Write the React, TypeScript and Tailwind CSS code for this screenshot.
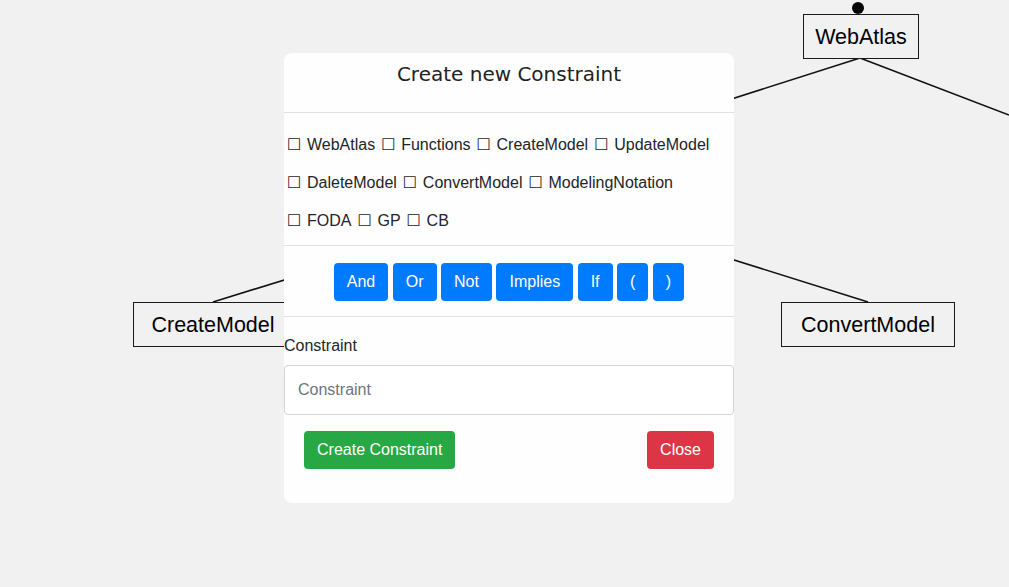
import React from "react";

const items: string[][] = [
  ["WebAtlas", "Functions", "CreateModel", "UpdateModel"],
  ["DaleteModel", "ConvertModel", "ModelingNotation"],
  ["FODA", "GP", "CB"],
];

const ops = ["And", "Or", "Not", "Implies", "If", "(", ")"];

function Node({ label, className }: { label: string; className: string }) {
  return (
    <div
      className={
        "absolute flex items-center justify-center border-[1.5px] border-[#1a1a1a] bg-[#f1f1f1] text-[21.5px] text-black h-[45px] pt-[2px] " +
        className
      }
    >
      {label}
    </div>
  );
}

export default function App() {
  return (
    <div
      className="relative w-[1009px] h-[587px] overflow-hidden bg-[#f1f1f1]"
      style={{ fontFamily: '"Liberation Sans", Arial, sans-serif' }}
    >
      <svg className="absolute inset-0" width="1009" height="587">
        <line x1="860" y1="58" x2="600" y2="141" stroke="#111" strokeWidth="1.6" />
        <line x1="860" y1="58" x2="1009" y2="115" stroke="#111" strokeWidth="1.6" />
        <line x1="213" y1="302" x2="420" y2="238" stroke="#111" strokeWidth="1.6" />
        <line x1="868" y1="302" x2="600" y2="218" stroke="#111" strokeWidth="1.6" />
        <circle cx="858" cy="8" r="6" fill="#000" />
      </svg>

      <Node label="WebAtlas" className="left-[803px] top-[14px] w-[116px]" />
      <Node label="CreateModel" className="left-[133px] top-[302px] w-[160px]" />
      <Node label="ConvertModel" className="left-[781px] top-[302px] w-[174px]" />

      <div className="absolute left-[284px] top-[53px] w-[450px] h-[450px] rounded-[8px] bg-[#fffefe] text-[#212529] text-[16px] flex flex-col">
        <div className="h-[60px] border-b border-[#dee2e6] pt-[8px] text-center">
          <div
            className="text-[20px] leading-[26px] text-[#222]"
            style={{ fontFamily: '"DejaVu Sans", Verdana, sans-serif' }}
          >
            Create new Constraint
          </div>
        </div>

        <div className="h-[133px] border-b border-[#dee2e6] pt-[13px] pl-[3px] flex flex-col">
          {items.map((row, i) => (
            <div key={i} className="h-[38px] flex items-center gap-[6px] whitespace-nowrap">
              {row.map((it) => (
                <div key={it} className="flex items-center gap-[7px]">
                  <span
                    style={{ fontFamily: '"DejaVu Sans", sans-serif' }}
                    className="inline-block w-[13px] text-[16px] leading-[20px]"
                  >
                    ☐
                  </span>
                  <span>{it}</span>
                </div>
              ))}
            </div>
          ))}
        </div>

        <div className="h-[71px] border-b border-[#dee2e6] flex items-center justify-center gap-[4.5px] pt-[1px]">
          {ops.map((o) => (
            <button
              key={o}
              className="h-[38px] px-[13px] rounded-[4px] bg-[#007bff] text-white text-[16px] leading-[24px]"
            >
              {o}
            </button>
          ))}
        </div>

        <div className="pt-[17px] flex flex-col">
          <div className="h-[24px] leading-[24px]">Constraint</div>
          <input
            placeholder="Constraint"
            className="mt-[7px] block w-[450px] h-[50px] rounded-[4px] border border-[#ced4da] bg-white px-[13px] text-[16px] placeholder:text-[#6c757d] outline-none"
            style={{ fontFamily: '"Liberation Sans", Arial, sans-serif' }}
          />
          <div className="mt-[16px] flex justify-between px-[20px]">
            <button className="h-[38px] px-[13px] rounded-[4px] bg-[#28a745] text-white text-[16px]">
              Create Constraint
            </button>
            <button className="h-[38px] px-[13px] rounded-[4px] bg-[#dc3545] text-white text-[16px]">
              Close
            </button>
          </div>
        </div>
      </div>
    </div>
  );
}
